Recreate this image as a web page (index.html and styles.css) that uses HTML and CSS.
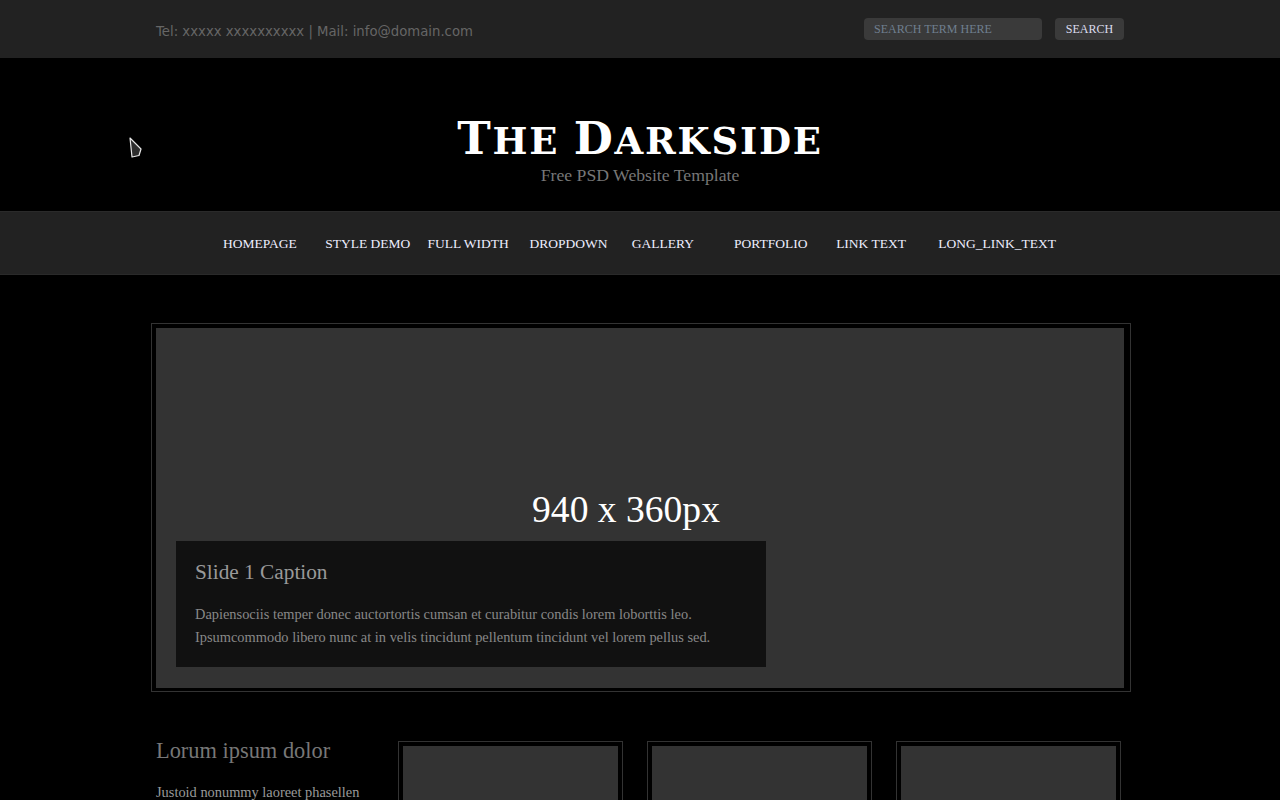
FILE: index.html
```html
<!DOCTYPE html>
<html lang="en">
<head>
<meta charset="utf-8">
<title>The Darkside</title>
<link rel="stylesheet" href="styles.css">
</head>
<body>
<div class="topbar">
  <div class="wrap topbar-inner">
    <p class="contact">Tel: xxxxx xxxxxxxxxx | Mail: info@domain.com</p>
    <form class="search">
      <input class="search-input" type="text" placeholder="SEARCH TERM HERE">
      <button class="search-btn" type="button">SEARCH</button>
    </form>
  </div>
</div>
<header class="masthead">
  <h1 class="logo"><span class="cap">T</span>HE <span class="cap">D</span>ARKSIDE</h1>
  <p class="tagline">Free PSD Website Template</p>
</header>
<nav class="mainnav">
  <ul class="menu">
    <li>HOMEPAGE</li>
    <li>STYLE DEMO</li>
    <li>FULL WIDTH</li>
    <li>DROPDOWN</li>
    <li>GALLERY</li>
    <li>PORTFOLIO</li>
    <li>LINK TEXT</li>
    <li>LONG_LINK_TEXT</li>
  </ul>
</nav>
<main class="wrap content">
  <section class="slider">
    <div class="slide">
      <div class="slide-image"><span class="slide-size">940 x 360px</span></div>
      <div class="caption">
        <h2 class="caption-title">Slide 1 Caption</h2>
        <p class="caption-text">Dapiensociis temper donec auctortortis cumsan et curabitur condis lorem loborttis leo.<br>Ipsumcommodo libero nunc at in velis tincidunt pellentum tincidunt vel lorem pellus sed.</p>
      </div>
    </div>
  </section>
  <section class="intro">
    <div class="intro-text">
      <h2 class="intro-title">Lorum ipsum dolor</h2>
      <p class="intro-body">Justoid nonummy laoreet phasellen penatibus justo porta mauris pede ultricies.</p>
    </div>
    <div class="thumb"><div class="thumb-img"></div></div>
    <div class="thumb"><div class="thumb-img"></div></div>
    <div class="thumb"><div class="thumb-img"></div></div>
  </section>
</main>
<svg class="pointer" width="16" height="22" viewBox="0 0 16 22"><path d="M1 1 L12 12 L10 18.5 L3 20 Z" fill="#2e2e2e" stroke="#e8e8e8" stroke-width="1.2" stroke-linejoin="round"/></svg>
</body>
</html>
```

FILE: styles.css
```css
* { box-sizing: border-box; }
html, body { margin: 0; padding: 0; background: #000; }
body { font-family: "Liberation Serif", Georgia, serif; color: #aaa; position: relative; }
.wrap { width: 980px; margin: 0 auto; }

.topbar { background: #222; height: 58px; }
.topbar-inner { height: 58px; display: flex; align-items: center; justify-content: space-between; padding: 0 6px; }
.contact { margin: 0; padding-top: 4px; font-family: "DejaVu Sans", Verdana, sans-serif; font-size: 13.25px; color: #666; }
.search { display: flex; align-items: center; gap: 13px; margin-top: 0; }
.search-input { width: 178px; height: 22px; border: 0; border-radius: 4px; background: #3a3a3a; padding: 0 10px; font-family: "Liberation Serif", serif; font-size: 12px; color: #789; outline: none; }
.search-input::placeholder { color: #6f7f8f; }
.search-btn { width: 69px; height: 22px; border: 0; border-radius: 4px; background: #3a3a3a; font-family: "Liberation Serif", serif; font-size: 12px; color: #dde; padding: 0; }

.masthead { height: 153px; text-align: center; padding-top: 58px; }
.logo { margin: 0; font-family: "DejaVu Serif", serif; font-weight: bold; font-size: 37px; line-height: 46px; color: #fff; letter-spacing: 1.75px; }
.logo .cap { font-size: 45px; }
.tagline { margin: 0; padding-top: 1px; font-size: 17.7px; color: #777; line-height: 20px; }

.mainnav { background: #222; height: 64px; border-top: 1px solid #2a2a2a; border-bottom: 1px solid #2a2a2a; }
.menu { list-style: none; margin: 0; padding: 2px 0 0 223px; display: flex; height: 62px; align-items: center; }
.menu li { width: 102.2px; flex: none; white-space: nowrap; font-size: 13.5px; color: #eef; }

.content { padding-top: 48px; position: relative; left: 1px; }
.slider { border: 1px solid #333; padding: 4px 6px 3px 4px; }
.slide { background: #333; height: 360px; position: relative; }
.slide-image { width: 940px; height: 360px; display: flex; align-items: center; justify-content: center; padding-top: 2px; }
.slide-size { font-size: 37.6px; color: #fff; }
.caption { position: absolute; left: 20px; top: 213px; width: 590px; height: 126px; background: #111; padding: 19px 19px; }
.caption-title { margin: 0; font-weight: normal; font-size: 21.3px; color: #999; line-height: 24px; }
.caption-text { margin: 19px 0 0; font-size: 14.4px; line-height: 23px; color: #888; }

.intro { display: flex; margin-top: 49px; gap: 24px; padding-left: 5px; }
.intro-text { width: 218px; }
.intro-title { margin: -2px 0 0; font-weight: normal; font-size: 22.4px; color: #777; line-height: 24px; }
.intro-body { margin: 18px 0 0; font-size: 14.4px; color: #999; line-height: 22px; }
.thumb { width: 225px; height: 200px; border: 1px solid #333; padding: 4px; }
.thumb-img { background: #333; height: 180px; width: 215px; }

.pointer { position: absolute; left: 129px; top: 137px; }
```
